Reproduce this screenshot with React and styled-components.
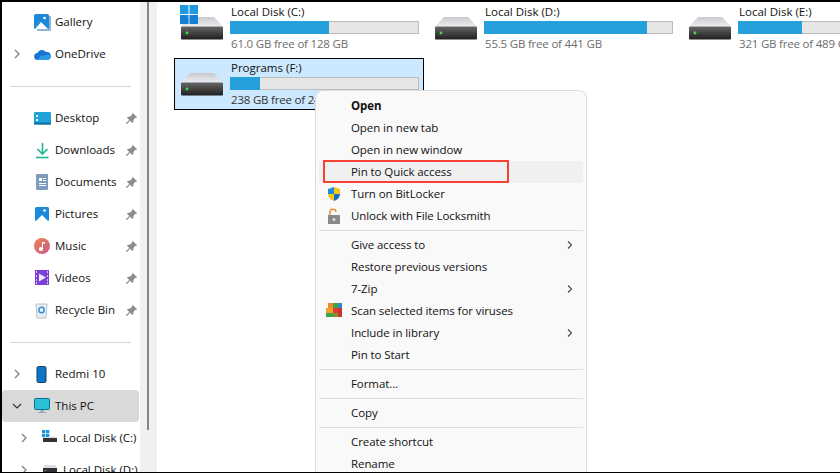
import React from 'react';
import styled, { createGlobalStyle } from 'styled-components';

const GlobalStyle = createGlobalStyle`
  html, body { margin: 0; padding: 0; background: #fff; }
  * { box-sizing: border-box; }
`;

const Explorer = styled.div`
  position: relative;
  display: flex;
  width: 840px;
  height: 473px;
  overflow: hidden;
  background: #fff;
  border-top: 2px solid #000;
  border-left: 2px solid #000;
  border-bottom: 1px solid #000;
  font-family: "Open Sans", "Noto Sans", sans-serif;
  font-size: 11.5px;
  color: #111;
`;

const Sidebar = styled.nav`
  flex: 0 0 138px;
  padding: 4px 1px 0 0;
  overflow: hidden;
`;

const NavRow = styled.div`
  display: flex;
  align-items: center;
  height: 32px;
  border-radius: 4px;
  background: ${({ $active }) => ($active ? '#d9d9d9' : 'transparent')};
  white-space: nowrap;
`;

const Caret = styled.div`
  flex: 0 0 ${({ $sub }) => ($sub ? '38px' : '30px')};
  padding-left: ${({ $sub }) => ($sub ? '17px' : '10px')};
  display: flex;
  align-items: center;
  color: #7d7d7d;
`;

const NavIcon = styled.div`
  flex: 0 0 23px;
  display: flex;
  align-items: center;
  padding-left: 2px;
`;

const NavLabel = styled.span`
  flex: 1;
  padding-bottom: 2px;
`;

const PinMark = styled.svg`
  flex: 0 0 11px;
  width: 11px;
  height: 11px;
  margin-right: 2px;
`;

const NavDivider = styled.div`
  height: 32px;
  display: flex;
  align-items: center;
  padding: 0 8px;
  &::after {
    content: '';
    flex: 1;
    height: 1px;
    background: #d6d6d6;
  }
`;

const ScrollTrack = styled.div`
  flex: 0 0 16px;
  height: 100%;
  display: flex;
  justify-content: center;
  background: #f0f0f0;
`;

const ScrollThumb = styled.div`
  width: 2px;
  height: 428px;
  background: #868686;
`;

const Main = styled.main`
  flex: 1;
  min-width: 0;
  border-left: 1px solid #f2f2f2;
  padding: 0 0 0 17px;
`;

const DiskGrid = styled.div`
  display: grid;
  grid-template-columns: repeat(3, 250px);
  grid-auto-rows: 52px;
  gap: 4px;
`;

const DiskTile = styled.div`
  display: flex;
  padding: 0 4px 0 5px;
  border: 1px solid ${({ $selected }) => ($selected ? '#000' : 'transparent')};
  background: ${({ $selected }) => ($selected ? '#cce8ff' : 'transparent')};
`;

const DiskIconBox = styled.div`
  position: relative;
  flex: 0 0 50px;
  display: flex;
  align-items: flex-end;
  padding-bottom: 13px;
`;

const WinBadge = styled.svg`
  position: absolute;
  left: 0;
  top: 2px;
  width: 18px;
  height: 19px;
`;

const DiskInfo = styled.div`
  flex: 1;
  padding-top: 1px;
`;

const DiskName = styled.div`
  height: 16px;
  line-height: 16px;
  padding-left: 1px;
`;

const UsageBar = styled.div`
  height: 13px;
  margin: 1px 0 2px;
  background: #e6e6e6;
  border: 1px solid #bcbcbc;
`;

const UsageFill = styled.div`
  height: 13px;
  width: ${({ $pct }) => $pct}%;
  background: #26a0da;
  margin: -1px 0 0 -1px;
`;

const DiskFree = styled.div`
  height: 16px;
  line-height: 16px;
  padding-left: 1px;
  letter-spacing: -0.2px;
  white-space: nowrap;
  color: ${({ $selected }) => ($selected ? '#333' : '#6d6d6d')};
`;

const ContextMenu = styled.div`
  position: absolute;
  left: 313px;
  top: 88px;
  width: 272px;
  padding: 4px 3px 0;
  background: #f9f9f9;
  border: 1px solid #dcdcdc;
  border-radius: 8px 8px 0 0;
`;

const MenuRow = styled.div`
  position: relative;
  display: flex;
  align-items: center;
  height: 22px;
  padding: 0 0 1px 32px;
  border-radius: 4px;
  letter-spacing: -0.08px;
  font-weight: ${({ $bold }) => ($bold ? 700 : 400)};
  background: ${({ $hover }) => ($hover ? '#f0f0f0' : 'transparent')};
  white-space: nowrap;
`;

const MenuIcon = styled.div`
  position: absolute;
  left: 7px;
  top: 3px;
  width: 16px;
  height: 16px;
  display: flex;
`;

const SubArrow = styled.svg`
  position: absolute;
  right: 9px;
  top: 7px;
  width: 8px;
  height: 8px;
`;

const MenuDivider = styled.div`
  height: 7px;
  padding-top: 3px;
  &::after {
    content: '';
    display: block;
    height: 1px;
    background: #dedede;
  }
`;

const Callout = styled.div`
  position: absolute;
  left: 321px;
  top: 158px;
  width: 186px;
  height: 23px;
  border: 2px solid #f44336;
  pointer-events: none;
`;

const Chevron = ({ open }) => (
  <svg width="10" height="10" viewBox="0 0 10 10" fill="none" stroke={open ? '#333' : '#7d7d7d'} strokeWidth="1.2">
    <path d={open ? 'M1 3l4 4 4-4' : 'M3 1l4 4-4 4'} />
  </svg>
);

const GalleryIcon = () => (
  <svg width="17" height="17" viewBox="0 0 17 17">
    <rect x="3" y="2" width="14" height="15" rx="1" fill="#8bb7dd" />
    <rect x="0" y="0" width="15" height="15" rx="1.5" fill="#1e88d9" />
    <circle cx="10.5" cy="4" r="1.3" fill="#fff" />
    <path d="M1 15l6-7 7 7z" fill="#fff" />
  </svg>
);

const CloudIcon = () => (
  <svg width="17" height="11" viewBox="0 0 17 11">
    <path d="M4 11a3.500 3.500 0 0 1-.6-7A5 5 0 0 1 12 3a4 4 0 0 1 1.500 8z" fill="#1a73d0" />
    <path d="M3 11h11a3 3 0 0 0 1-5.500L7 7z" fill="#2c9be8" />
  </svg>
);

const DesktopIcon = () => (
  <svg width="17" height="13" viewBox="0 0 17 13">
    <rect width="17" height="12.500" rx="1" fill="#1fa3d8" />
    <rect y="10.500" width="17" height="2" fill="#0f6f9f" />
    <rect x="2" y="3" width="2" height="2" fill="#e6f7ff" />
    <rect x="2" y="7" width="2" height="2" fill="#e6f7ff" />
  </svg>
);

const DownloadIcon = () => (
  <svg width="17" height="17" viewBox="0 0 17 17" fill="none" stroke="#1fb58f" strokeWidth="1.600">
    <path d="M8.500 1v10M3.500 7l5 5 5-5" />
    <path d="M2 15.500h12.500" />
  </svg>
);

const DocumentIcon = () => (
  <svg width="17" height="17" viewBox="0 0 17 17">
    <rect x="2" y="0" width="12" height="16" rx="1" fill="#7f9cc0" />
    <path d="M5 4h3v3H5zM9 4h3v1H9zM9 6h3v1H9zM5 9h7v1H5zM5 11h7v1H5z" fill="#fff" />
  </svg>
);

const PicturesIcon = () => (
  <svg width="17" height="15" viewBox="0 0 17 15">
    <rect x="1" y="0" width="14" height="14" rx="1.500" fill="#1e88d9" />
    <circle cx="10.500" cy="3.500" r="1.300" fill="#fff" />
    <path d="M2 14l6-6 6 6z" fill="#fff" />
  </svg>
);

const MusicIcon = () => (
  <svg width="17" height="16" viewBox="0 0 17 16">
    <defs>
      <linearGradient id="mus" x1="0" y1="0" x2="1" y2="1">
        <stop offset="0" stopColor="#f0804a" />
        <stop offset="1" stopColor="#c85f92" />
      </linearGradient>
    </defs>
    <circle cx="8" cy="8" r="8" fill="url(#mus)" />
    <path d="M8 4h3v1.500H9V11a2 2 0 1 1-1-1.700z" fill="#fff" />
  </svg>
);

const VideoIcon = () => (
  <svg width="16" height="16" viewBox="0 0 16 16">
    <rect x="1" y="0" width="14" height="15" fill="#7b3fd6" />
    <path d="M2 1h1v2H2zM2 5h1v2H2zM2 9h1v2H2zM2 12h1v2H2zM13 1h1v2h-1zM13 5h1v2h-1zM13 9h1v2h-1zM13 12h1v2h-1z" fill="#d9c6f7" />
    <path d="M5 3.500l7 4-7 4z" fill="#efe6fd" />
  </svg>
);

const BinIcon = () => (
  <svg width="16" height="17" viewBox="0 0 16 17">
    <path d="M2 2h11l-1 14H3z" fill="#e8eef2" stroke="#b9c2c8" />
    <circle cx="7.500" cy="8" r="2.700" fill="none" stroke="#2a8fd8" strokeWidth="1.400" />
  </svg>
);

const PhoneIcon = () => (
  <svg width="17" height="17" viewBox="0 0 17 17">
    <rect x="3" y="0.500" width="9" height="16" rx="1.500" fill="#0b75c9" stroke="#1c3b58" />
  </svg>
);

const MonitorIcon = () => (
  <svg width="17" height="17" viewBox="0 0 17 17">
    <rect x="0.500" y="0.500" width="15" height="11" rx="1" fill="#29c0d8" stroke="#0f6f93" />
    <path d="M6.500 12h3v2h-3z" fill="#9aa8b0" />
    <path d="M4 14h8v1H4z" fill="#9aa8b0" />
  </svg>
);

const DriveIcon = ({ id }) => (
  <svg width="44" height="23" viewBox="0 0 44 23">
    <defs>
      <linearGradient id={id} x1="0" y1="0" x2="0" y2="1">
        <stop offset="0" stopColor="#666" />
        <stop offset="1" stopColor="#1f1f1f" />
      </linearGradient>
      <linearGradient id={`${id}-top`} x1="0" y1="0" x2="0" y2="1">
        <stop offset="0" stopColor="#c8c9ce" />
        <stop offset="1" stopColor="#eceef2" />
      </linearGradient>
    </defs>
    <path d="M1 9.500L10 0h24l9 9.500z" fill={`url(#${id}-top)`} />
    <rect x="1" y="9.500" width="42" height="13" rx="1" fill={`url(#${id})`} />
    <circle cx="7" cy="16" r="1.400" fill="#3fe03a" />
  </svg>
);

const SmallDriveIcon = ({ system }) => (
  <svg width="16" height="16" viewBox="0 0 16 16">
    {system ? (
      <>
        <path d="M0 0h3.300v3.300H0zM4 0h3.300v3.300H4zM0 4h3.300v3.300H0zM4 4h3.300v3.300H4z" fill="#1a94e0" />
        <path d="M8 6.500h5l2 1.500H1z" fill="#dcdde2" />
        <rect x="1" y="8" width="14" height="4" fill="#333" />
      </>
    ) : (
      <>
        <path d="M3 3h10l2 3H1z" fill="#dcdde2" />
        <rect x="1" y="6" width="14" height="6" fill="#333" />
        <rect x="3" y="8" width="1" height="1" fill="#3fe03a" />
      </>
    )}
  </svg>
);

const ShieldIcon = () => (
  <svg width="16" height="16" viewBox="0 0 16 16">
    <path d="M8 1L2 3v5h6z" fill="#1b8fe0" />
    <path d="M8 1l6 2v5H8z" fill="#f5c518" />
    <path d="M2 8h6v7c-3-1-5.500-3-6-7z" fill="#f5c518" />
    <path d="M14 8H8v7c3-1 5.500-3 6-7z" fill="#1b6fc0" />
  </svg>
);

const LockIcon = () => (
  <svg width="16" height="16" viewBox="0 0 16 16">
    <path d="M4 8V4.500a3 3 0 0 1 6-.5" fill="none" stroke="#e6953a" strokeWidth="1.500" />
    <rect x="2" y="7" width="12" height="9" fill="#8a8a8a" />
    <circle cx="8" cy="11.500" r="1.500" fill="#dcdcdc" />
  </svg>
);

const ScanIcon = () => (
  <svg width="16" height="16" viewBox="0 0 16 16">
    <rect width="5" height="5" x="2" y="0" fill="#f08a24" />
    <rect width="5" height="5" x="7" y="0" fill="#3fa34d" />
    <rect width="4" height="5" x="12" y="0" fill="#2f86c9" />
    <rect width="7" height="5" x="0" y="5" fill="#f0a02c" />
    <rect width="5" height="5" x="7" y="5" fill="#e23b2e" />
    <rect width="4" height="5" x="12" y="5" fill="#c6352a" />
    <rect width="7" height="4" x="0" y="10" fill="#3fa34d" />
    <rect width="5" height="4" x="7" y="10" fill="#8f8a34" />
    <rect width="4" height="4" x="12" y="10" fill="#c6352a" />
  </svg>
);

const Pin = () => (
  <PinMark viewBox="0 0 12 12">
    <path d="M7.500 0L12 4.500l-1 1-1-.3L8 8v2L7 11 4.500 8.500 1 12H0v-1l3.500-3.500L1 5l1-1h2L6.800 2 6.500 1z" fill="#8c8c8c" />
  </PinMark>
);

const Arrow = () => (
  <SubArrow viewBox="0 0 8 8" fill="none" stroke="#444" strokeWidth="1.100">
    <path d="M2 0.500L5.500 4 2 7.500" />
  </SubArrow>
);

const navTop = [
  { label: 'Gallery', icon: <GalleryIcon /> },
  { label: 'OneDrive', icon: <CloudIcon />, caret: true },
];

const navPinned = [
  { label: 'Desktop', icon: <DesktopIcon /> },
  { label: 'Downloads', icon: <DownloadIcon /> },
  { label: 'Documents', icon: <DocumentIcon /> },
  { label: 'Pictures', icon: <PicturesIcon /> },
  { label: 'Music', icon: <MusicIcon /> },
  { label: 'Videos', icon: <VideoIcon /> },
  { label: 'Recycle Bin', icon: <BinIcon /> },
];

const disks = [
  { name: 'Local Disk (C:)', free: '61.0 GB free of 128 GB', pct: 53, system: true },
  { name: 'Local Disk (D:)', free: '55.5 GB free of 441 GB', pct: 87 },
  { name: 'Local Disk (E:)', free: '321 GB free of 489 GB', pct: 34 },
  { name: 'Programs (F:)', free: '238 GB free of 249 GB', pct: 16, selected: true },
];

const menuGroups = [
  [
    { label: 'Open', bold: true },
    { label: 'Open in new tab' },
    { label: 'Open in new window' },
    { label: 'Pin to Quick access', hover: true },
    { label: 'Turn on BitLocker', icon: <ShieldIcon /> },
    { label: 'Unlock with File Locksmith', icon: <LockIcon /> },
  ],
  [
    { label: 'Give access to', sub: true },
    { label: 'Restore previous versions' },
    { label: '7-Zip', sub: true },
    { label: 'Scan selected items for viruses', icon: <ScanIcon /> },
    { label: 'Include in library', sub: true },
    { label: 'Pin to Start' },
  ],
  [{ label: 'Format...' }],
  [{ label: 'Copy' }],
  [{ label: 'Create shortcut' }, { label: 'Rename' }],
];

const App = () => (
  <>
    <GlobalStyle />
    <Explorer>
      <Sidebar>
        {navTop.map((item) => (
          <NavRow key={item.label}>
            <Caret>{item.caret && <Chevron />}</Caret>
            <NavIcon>{item.icon}</NavIcon>
            <NavLabel>{item.label}</NavLabel>
          </NavRow>
        ))}
        <NavDivider />
        {navPinned.map((item) => (
          <NavRow key={item.label}>
            <Caret />
            <NavIcon>{item.icon}</NavIcon>
            <NavLabel>{item.label}</NavLabel>
            <Pin />
          </NavRow>
        ))}
        <NavDivider />
        <NavRow>
          <Caret><Chevron /></Caret>
          <NavIcon><PhoneIcon /></NavIcon>
          <NavLabel>Redmi 10</NavLabel>
        </NavRow>
        <NavRow $active>
          <Caret><Chevron open /></Caret>
          <NavIcon><MonitorIcon /></NavIcon>
          <NavLabel>This PC</NavLabel>
        </NavRow>
        <NavRow>
          <Caret $sub><Chevron /></Caret>
          <NavIcon><SmallDriveIcon system /></NavIcon>
          <NavLabel>Local Disk (C:)</NavLabel>
        </NavRow>
        <NavRow>
          <Caret $sub><Chevron /></Caret>
          <NavIcon><SmallDriveIcon /></NavIcon>
          <NavLabel>Local Disk (D:)</NavLabel>
        </NavRow>
      </Sidebar>
      <ScrollTrack>
        <ScrollThumb />
      </ScrollTrack>
      <Main>
        <DiskGrid>
          {disks.map((disk, i) => (
            <DiskTile key={disk.name} $selected={disk.selected}>
              <DiskIconBox>
                <DriveIcon id={`drive${i}`} />
                {disk.system && (
                  <WinBadge viewBox="0 0 18 19">
                    <path d="M0 0h8.500v9H0zM9.500 0H18v9H9.500z" fill="#1f9ae2" />
                    <path d="M0 10h8.500v9H0zM9.500 10H18v9H9.500z" fill="#1280d4" />
                  </WinBadge>
                )}
              </DiskIconBox>
              <DiskInfo>
                <DiskName>{disk.name}</DiskName>
                <UsageBar>
                  <UsageFill $pct={disk.pct} />
                </UsageBar>
                <DiskFree $selected={disk.selected}>{disk.free}</DiskFree>
              </DiskInfo>
            </DiskTile>
          ))}
        </DiskGrid>
      </Main>
      <ContextMenu>
        {menuGroups.map((group, g) => (
          <React.Fragment key={group[0].label}>
            {g > 0 && <MenuDivider />}
            {group.map((item) => (
              <MenuRow key={item.label} $bold={item.bold} $hover={item.hover}>
                {item.icon && <MenuIcon>{item.icon}</MenuIcon>}
                {item.label}
                {item.sub && <Arrow />}
              </MenuRow>
            ))}
          </React.Fragment>
        ))}
      </ContextMenu>
      <Callout />
    </Explorer>
  </>
);

export default App;
